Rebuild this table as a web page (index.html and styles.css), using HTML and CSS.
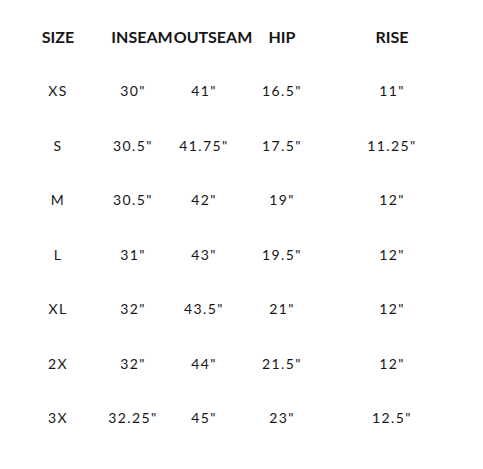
FILE: index.html
```html
<!DOCTYPE html>
<html>
<head>
<meta charset="utf-8">
<link rel="stylesheet" href="styles.css">
</head>
<body>
<div class="chart">
  <div class="cell head">SIZE</div>
  <div class="cell head shift">INSEAM</div>
  <div class="cell head shift">OUTSEAM</div>
  <div class="cell head">HIP</div>
  <div class="cell head">RISE</div>

  <div class="cell">XS</div><div class="cell">30"</div><div class="cell">41"</div><div class="cell">16.5"</div><div class="cell">11"</div>
  <div class="cell">S</div><div class="cell">30.5"</div><div class="cell">41.75"</div><div class="cell">17.5"</div><div class="cell">11.25"</div>
  <div class="cell">M</div><div class="cell">30.5"</div><div class="cell">42"</div><div class="cell">19"</div><div class="cell">12"</div>
  <div class="cell">L</div><div class="cell">31"</div><div class="cell">43"</div><div class="cell">19.5"</div><div class="cell">12"</div>
  <div class="cell">XL</div><div class="cell">32"</div><div class="cell">43.5"</div><div class="cell">21"</div><div class="cell">12"</div>
  <div class="cell">2X</div><div class="cell">32"</div><div class="cell">44"</div><div class="cell">21.5"</div><div class="cell">12"</div>
  <div class="cell">3X</div><div class="cell">32.25"</div><div class="cell">45"</div><div class="cell">23"</div><div class="cell">12.5"</div>
</div>
</body>
</html>
```

FILE: styles.css
```css
html, body {
  margin: 0;
  padding: 0;
  background: #ffffff;
}
body {
  font-family: Lato, "Open Sans", sans-serif;
  color: #161616;
}
.chart {
  display: grid;
  grid-template-columns: 74px 76px 66px 90px 130px;
  grid-auto-rows: 54.5px;
  padding: 9px 0 0 21px;
}
.cell {
  display: flex;
  align-items: center;
  justify-content: center;
  white-space: nowrap;
  font-size: 14px;
  letter-spacing: 1.4px;
}
.head {
  font-size: 16px;
  font-weight: 700;
  letter-spacing: 0;
}
.shift {
  padding-left: 18px;
}
```
